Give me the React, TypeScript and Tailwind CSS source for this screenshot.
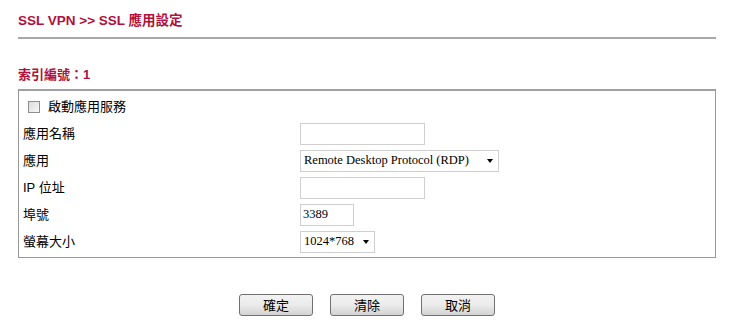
import React from 'react';

const labelFont = "font-['Liberation_Sans','Noto_Sans_CJK_TC',sans-serif]";

function FakeSelect({ value, width }: { value: string; width: string }) {
  return (
    <div className={`${width} h-[22px] border border-[#cfcfcf] bg-white flex items-center justify-between pl-[3px] pr-[5px]`}>
      <span className="font-['Liberation_Serif','Noto_Sans_CJK_TC',serif] text-[12.5px] text-black leading-none">{value}</span>
      <span className="w-0 h-0 border-l-[3.5px] border-r-[3.5px] border-t-[4px] border-l-transparent border-r-transparent border-t-black" />
    </div>
  );
}

function TextBox({ width, value = '' }: { width: string; value?: string }) {
  return (
    <input
      type="text"
      readOnly
      value={value}
      className={`${width} h-[22px] border border-[#cfcfcf] bg-white px-[2px] font-['Liberation_Serif',serif] text-[12.5px] text-black outline-none`}
    />
  );
}

export default function App() {
  const rows = [
    { label: '應用名稱', field: <TextBox width="w-[125px]" /> },
    { label: '應用', field: <FakeSelect value="Remote Desktop Protocol (RDP)" width="w-[199px]" /> },
    { label: 'IP 位址', field: <TextBox width="w-[125px]" /> },
    { label: '埠號', field: <TextBox width="w-[54px]" value="3389" /> },
    { label: '螢幕大小', field: <FakeSelect value="1024*768" width="w-[75px]" /> },
  ];

  return (
    <div className={`min-h-screen bg-white ${labelFont}`}>
      <div className="w-[698px] ml-[18px] pt-[12px]">
        {/* Title */}
        <div className="h-[27px] border-b-2 border-[#a8a8a8]">
          <h1 className="text-[13.5px] font-bold text-[#b0103c] leading-[17px]">SSL VPN &gt;&gt; SSL 應用設定</h1>
        </div>

        <div className="mt-[28px] text-[13px] font-bold text-[#b0103c] leading-[16px]">索引編號：1</div>

        {/* Settings box */}
        <div className="mt-[6px] border border-[#999] border-t-2 border-t-[#a0a0a0] py-[2px]">
          <div className="h-[27px] flex items-center pl-[9px]">
            <span className="w-[12px] h-[12px] border border-[#8e8f8f] bg-gradient-to-br from-[#dcdcdc] to-[#f8f8f8]" />
            <span className="ml-[8px] text-[13px] text-black">啟動應用服務</span>
          </div>
          {rows.map((row) => (
            <div key={row.label} className="h-[27px] grid grid-cols-[281px_1fr] items-center">
              <span className="pl-[4px] text-[13px] text-black">{row.label}</span>
              <div className="flex items-center">{row.field}</div>
            </div>
          ))}
        </div>

        {/* Buttons */}
        <div className="mt-[36px] flex justify-center gap-[17px]">
          {['確定', '清除', '取消'].map((text) => (
            <button
              key={text}
              className="w-[74px] h-[22px] rounded-[3px] border border-[#707070] bg-gradient-to-b from-[#f2f2f2] via-[#ebebeb] to-[#d3d3d3] text-[13px] text-black leading-none"
            >
              {text}
            </button>
          ))}
        </div>
      </div>
    </div>
  );
}
